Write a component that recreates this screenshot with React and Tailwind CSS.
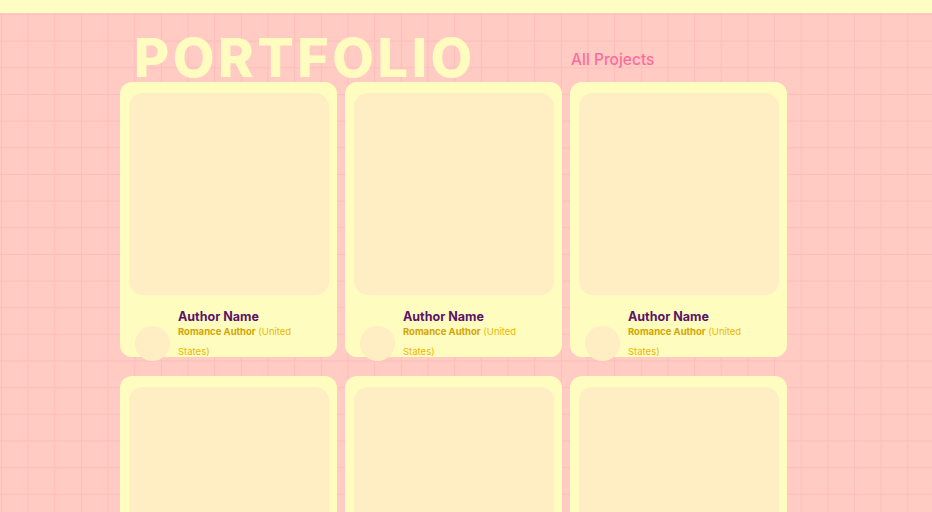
import React from 'react';

const cards = [1, 2, 3, 4, 5, 6];

const Card = () => (
  <div className="relative w-[217px] h-[275px] bg-[#fffcc0] rounded-[12px] pt-[11px] pl-[9px] pr-[8px]">
    <div className="h-[202px] bg-[#ffedc3] rounded-[14px]" />
    <div className="flex items-start pl-[6px] pt-[14px]">
      <div className="w-[35px] h-[35px] rounded-full bg-[#ffedc3] mt-[17px] shrink-0" />
      <div className="ml-[8px] w-[130px]">
        <div className="text-[12.5px] font-bold text-[#5b1466] leading-[16px]">Author Name</div>
        <div className="text-[9.5px] leading-[20px] -mt-[3px] text-[#e8b800]">
          <span className="font-bold text-[#d4a400]">Romance Author</span> (United States)
        </div>
      </div>
    </div>
  </div>
);

export default function App() {
  return (
    <div
      className="min-h-screen bg-[#ffcbc3] font-['Inter',sans-serif] bg-[linear-gradient(to_right,#ffbdbb_1.3px,transparent_1.3px),linear-gradient(to_bottom,#ffbdbb_1.3px,transparent_1.3px)] bg-[size:26.67px_26.67px] bg-[position:1px_14px]"
    >
      <div className="h-[13px] bg-[#fffdc2]" />
      <div className="pl-[120px]">
        <div className="grid grid-cols-[217px_217px_217px] gap-x-[8px] h-[69px] items-end">
          <h1 className="col-span-2 pl-[14px] text-[54px] leading-[1] font-extrabold tracking-[3.5px] text-[#fffcc0] -mb-[3px] relative z-0">
            PORTFOLIO
          </h1>
          <a className="pl-[1px] pb-[11px] text-[15.5px] font-medium text-[#ff6b9e]">All Projects</a>
        </div>
        <div className="grid grid-cols-[217px_217px_217px] gap-x-[8px] gap-y-[19px] relative z-10">
          {cards.map((c) => (
            <Card key={c} />
          ))}
        </div>
      </div>
    </div>
  );
}
